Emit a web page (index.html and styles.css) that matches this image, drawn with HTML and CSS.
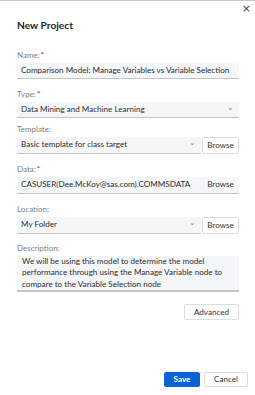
FILE: index.html
```html
<!DOCTYPE html>
<html>
<head>
<meta charset="utf-8">
<link rel="stylesheet" href="styles.css">
</head>
<body>
<div class="dialog">
  <button class="close" aria-label="Close">×</button>
  <h1 class="title">New Project</h1>
  <div class="fields">
    <div class="field">
      <div class="label">Name:<span class="req">*</span></div>
      <div class="input">Comparison Model: Manage Variables vs Variable Selection</div>
    </div>
    <div class="field f-type">
      <div class="label">Type:<span class="req">*</span></div>
      <div class="input select">Data Mining and Machine Learning<span class="chev">⌄</span></div>
    </div>
    <div class="field">
      <div class="label">Template:</div>
      <div class="row">
        <div class="input select grow">Basic template for class target<span class="chev">⌄</span></div>
        <button class="btn browse">Browse</button>
      </div>
    </div>
    <div class="field">
      <div class="label">Data:<span class="req">*</span></div>
      <div class="row">
        <div class="input grow">CASUSER(Dee.McKoy@sas.com).COMMSDATA</div>
        <span class="link">Browse</span>
      </div>
    </div>
    <div class="field">
      <div class="label">Location:</div>
      <div class="row">
        <div class="input select grow">My Folder<span class="chev">⌄</span></div>
        <button class="btn browse">Browse</button>
      </div>
    </div>
    <div class="field f-desc">
      <div class="label">Description:</div>
      <div class="input textarea">We will be using this model to determine the model performance through using the Manage Variable node to compare to the Variable Selection node</div>
    </div>
  </div>
  <div class="adv-row"><button class="btn adv">Advanced</button></div>
  <div class="footer">
    <button class="btn primary">Save</button>
    <button class="btn cancel">Cancel</button>
  </div>
</div>
</body>
</html>
```
FILE: styles.css
```css
* { box-sizing: border-box; }
html, body { margin: 0; padding: 0; background: #fff; }
body { font-family: "Lato", "Noto Sans", sans-serif; color: #2b2b2b; }
.dialog {
  position: relative;
  width: 255px;
  height: 395px;
  border-top: 1px solid #c9c9c9;
  padding: 0 16px 0 17px;
  display: flex;
  flex-direction: column;
}
.close {
  position: absolute;
  top: 2px;
  right: 4px;
  border: 0;
  background: none;
  font-size: 11px;
  line-height: 12px;
  color: #444;
  padding: 0;
  font-family: "DejaVu Sans", sans-serif;
}
.title {
  margin: 18px 0 0;
  font-size: 10.2px;
  line-height: 13px;
  font-weight: 700;
  color: #222;
}
.fields {
  margin-top: 18px;
  display: flex;
  flex-direction: column;
  gap: 10px;
}
.f-type { margin-bottom: -4px; }
.f-desc { margin-top: -1px; }
.label {
  font-size: 8px;
  line-height: 10px;
  color: #808080;
  margin-bottom: 3px;
}
.req { color: #d0021b; margin-left: 1px; }
.input {
  position: relative;
  background: #f5f6f8;
  border-bottom: 1.5px solid #c4c6ca;
  height: 16px;
  font-size: 8.1px;
  line-height: 14px;
  padding: 0 4px;
  color: #2d2d2d;
  white-space: nowrap;
  overflow: hidden;
}
.select { padding-right: 14px; }
.chev {
  position: absolute;
  right: 5px;
  top: -2px;
  font-size: 8px;
  color: #888;
}
.row { display: flex; align-items: stretch; gap: 1px; }
.row .input { height: 17px; line-height: 15px; }
.grow { flex: 1; min-width: 0; }
.btn {
  font-family: "Lato", "Noto Sans", sans-serif;
  font-size: 8.1px;
  line-height: 13px;
  padding: 0 4px;
  background: #fff;
  border: 1px solid #dcdde0;
  border-radius: 2px;
  color: #333;
}
.browse { width: 37px; height: 17px; }
.link {
  font-size: 8.1px;
  line-height: 15px;
  width: 37px;
  text-align: center;
  color: #333;
  background: #f5f6f8;
  border-bottom: 1.5px solid #c4c6ca;
  margin-left: -1px;
}
.textarea {
  height: 36px;
  white-space: normal;
  line-height: 11.3px;
  padding: 0 16px 0 5px;
  border-bottom-width: 2px;
}
.adv-row { display: flex; justify-content: flex-end; margin-top: 12px; }
.adv { width: 55px; height: 16px; }
.footer {
  margin-top: auto;
  margin-bottom: 8px;
  margin-right: -9px;
  display: flex;
  justify-content: flex-end;
  gap: 4px;
}
.primary {
  background: #0b63d4;
  border-color: #0b63d4;
  color: #fff;
  font-weight: 700;
  width: 36px;
  height: 15px;
}
.cancel { width: 44px; height: 15px; }
```
